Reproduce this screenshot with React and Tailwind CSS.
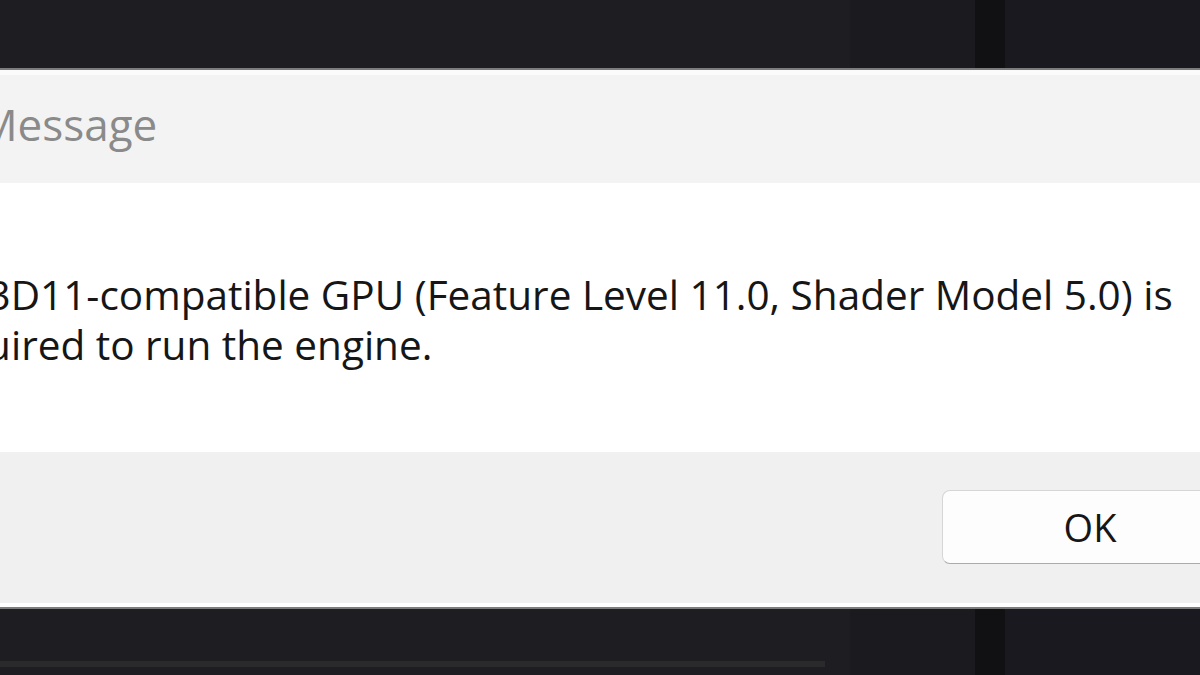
// App.jsx — Windows-style error message box, zoomed in and cropped at the edges

function DarkStrip({ className = '', children }) {
  // window edges of whatever sits behind the dialog
  return (
    <div className={`flex ${className}`}>
      <div className="w-[850px] bg-[#1e1d22]">{children}</div>
      <div className="w-[125px] bg-[#1a1a1f]" />
      <div className="w-[30px] bg-[#111113]" />
      <div className="flex-1 bg-[#19191f]" />
    </div>
  )
}

export default function App() {
  return (
    <div
      className="w-[1200px] h-[675px] overflow-hidden flex flex-col bg-[#1c1b20]"
      style={{ fontFamily: '"Open Sans", "Noto Sans", "DejaVu Sans", sans-serif' }}
    >
      <DarkStrip className="h-[68px] shrink-0" />

      {/* Dialog */}
      <div className="h-[541px] shrink-0 flex flex-col border-y-2 border-[#7c7c7c]">
        {/* Title bar */}
        <div className="h-[113px] shrink-0 bg-[#f3f3f3] border-t-[5px] border-[#fbfbfb]">
          <p className="ml-[-22px] pt-[24px] text-[44px] leading-[50px] text-[#8a8a8a]">
            Message
          </p>
        </div>

        {/* Message body */}
        <div className="h-[269px] shrink-0 bg-white">
          <p className="ml-[-78px] pt-[87px] text-[40.5px] leading-[50px] text-[#161616] whitespace-nowrap">
            A D3D11-compatible GPU (Feature Level 11.0, Shader Model 5.0) is
            <br />
            required to run the engine.
          </p>
        </div>

        {/* Footer with button */}
        <div className="h-[151px] shrink-0 bg-[#f0f0f0] flex justify-end items-start pt-[38px]">
          <button className="mr-[-38px] w-[296px] h-[74px] rounded-[8px] bg-[#fdfdfd] border border-[#d6d6d6] border-b-[#ababab] text-[38px] text-[#161616] flex items-center justify-center">
            OK
          </button>
        </div>

        <div className="h-[4px] shrink-0 bg-white" />
      </div>

      <DarkStrip className="flex-1">
        <div className="mt-[52px] h-[6px] w-[825px] bg-[#2a2a2d]" />
      </DarkStrip>
    </div>
  )
}
